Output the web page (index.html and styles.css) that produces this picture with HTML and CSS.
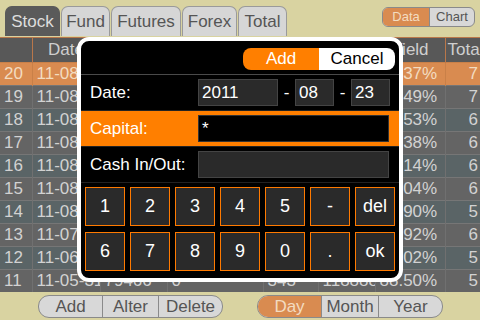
FILE: index.html
```html
<!DOCTYPE html>
<html>
<head>
  <title>Capital Log</title>
  <link rel="stylesheet" href="styles.css">
</head>
<body>
  <div class="top">
    <div class="tab active" style="width: 55px;">Stock</div>
    <div class="tab" style="width: 49px;">Fund</div>
    <div class="tab" style="width: 70px;">Futures</div>
    <div class="tab" style="width: 55px;">Forex</div>
    <div class="tab" style="width: 49px;">Total</div>
    <div class="seg small">
      <span class="on" style="width: 46px;">Data</span>
      <span style="width: 44px;">Chart</span>
    </div>
  </div>

  <table class="grid">
    <colgroup>
      <col style="width: 32px;"><col style="width: 68px;"><col style="width: 67px;"><col style="width: 96px;">
      <col style="width: 55px;"><col style="width: 57px;"><col style="width: 70px;"><col style="width: 35px;">
    </colgroup>
    <thead>
      <tr><th></th><th>Date</th><th>Capital</th><th>Cash In/Out</th><th>Profit</th><th>Value</th><th>Yield</th><th class="l">Total</th></tr>
    </thead>
    <tbody>
      <tr class="sel"><td>20</td><td>11-08-23</td><td>82410</td><td>0</td><td>512</td><td>118660</td><td class="r">16.37%</td><td class="r">7</td></tr>
      <tr><td>19</td><td>11-08-22</td><td>81898</td><td>0</td><td>-221</td><td>118148</td><td class="r">15.49%</td><td class="r">7</td></tr>
      <tr class="alt"><td>18</td><td>11-08-19</td><td>82119</td><td>0</td><td>310</td><td>118369</td><td class="r">15.53%</td><td class="r">6</td></tr>
      <tr><td>17</td><td>11-08-18</td><td>81809</td><td>0</td><td>-402</td><td>118059</td><td class="r">14.38%</td><td class="r">6</td></tr>
      <tr class="alt"><td>16</td><td>11-08-17</td><td>82211</td><td>0</td><td>128</td><td>118461</td><td class="r">14.14%</td><td class="r">6</td></tr>
      <tr><td>15</td><td>11-08-16</td><td>82083</td><td>0</td><td>95</td><td>118333</td><td class="r">13.04%</td><td class="r">6</td></tr>
      <tr class="alt"><td>14</td><td>11-08-15</td><td>81988</td><td>0</td><td>-65</td><td>118238</td><td class="r">12.90%</td><td class="r">5</td></tr>
      <tr><td>13</td><td>11-07-29</td><td>82053</td><td>0</td><td>240</td><td>118303</td><td class="r">12.92%</td><td class="r">6</td></tr>
      <tr class="alt"><td>12</td><td>11-06-30</td><td>81813</td><td>0</td><td>-130</td><td>118063</td><td class="r">10.02%</td><td class="r">5</td></tr>
      <tr><td>11</td><td>11-05-31</td><td>79466</td><td>0</td><td>343</td><td>118888</td><td class="r">88.50%</td><td class="r">5</td></tr>
    </tbody>
  </table>

  <div class="bottom">
    <div class="seg">
      <span style="width: 63px;">Add</span>
      <span style="width: 55px;">Alter</span>
      <span style="width: 63px;">Delete</span>
    </div>
    <div class="seg">
      <span class="on" style="width: 63px;">Day</span>
      <span style="width: 56px;">Month</span>
      <span style="width: 63px;">Year</span>
    </div>
  </div>

  <div class="dialog">
    <div class="dialog-head">
      <div class="choice">
        <span class="add">Add</span>
        <span class="cancel">Cancel</span>
      </div>
    </div>
    <div class="field">
      <label>Date:</label>
      <div class="box" style="width: 80px;">2011</div>
      <span class="dash">-</span>
      <div class="box" style="width: 39px;">08</div>
      <span class="dash">-</span>
      <div class="box" style="width: 39px;">23</div>
    </div>
    <div class="field current">
      <label>Capital:</label>
      <div class="box wide">*</div>
    </div>
    <div class="field">
      <label>Cash In/Out:</label>
      <div class="box wide"></div>
    </div>
    <div class="keypad">
      <button>1</button><button>2</button><button>3</button><button>4</button><button>5</button><button>-</button><button>del</button>
      <button>6</button><button>7</button><button>8</button><button>9</button><button>0</button><button>.</button><button>ok</button>
    </div>
  </div>
</body>
</html>
```

FILE: styles.css
```css
body { margin: 0; width: 480px; height: 320px; overflow: hidden; background: #d9d3a1; font-family: "Liberation Sans", Arial, sans-serif; position: relative; }

.top { height: 37px; display: flex; align-items: flex-end; padding-left: 5px; box-sizing: border-box; padding-bottom: 1px; }
.tab { height: 30px; margin-right: 1px; box-sizing: border-box; border: 1px solid #9a9a9a; border-bottom: none; border-radius: 7px 7px 0 0; background: #d6d6d6; color: #555; font-size: 17px; line-height: 30px; text-align: center; }
.tab.active { background: #5a5a5a; color: #ddd; border-color: #5a5a5a; }

.seg { display: flex; border: 1px solid #8a8a8a; border-radius: 11px; overflow: hidden; background: #d8d8d8; height: 23px; box-sizing: border-box; }
.seg span { display: block; text-align: center; color: #555; font-size: 17px; line-height: 21px; border-left: 1px solid #8a8a8a; }
.seg span:first-child { border-left: none; }
.seg span.on { background: #d98b50; color: #f3dcc0; }
.seg.small { margin-left: auto; align-self: flex-start; margin-top: 7px; margin-right: 5px; height: 20px; border-radius: 6px; }
.seg.small span { font-size: 13px; line-height: 18px; }

.grid { width: 480px; table-layout: fixed; border-collapse: collapse; }
.grid th, .grid td { white-space: nowrap; overflow: hidden; padding: 0 4px; font-size: 17px; font-weight: normal; }
.grid th { height: 24px; background: #585858; color: #cfcfcf; border-top: 1px solid #b9774a; border-left: 1px solid #b9774a; text-align: center; }
.grid th:first-child { border-left: none; }
.grid th.l { text-align: left; padding-left: 2px; }
.grid td { height: 22px; background: #646464; color: #d2d2d2; border-top: 1px solid #767676; border-left: 1px solid #707070; text-align: left; }
.grid td:first-child { border-left: none; }
.grid tr.alt td { background: #5a6466; }
.grid tr.sel td { background: #d98b50; color: #f3dcc0; border-color: #c98048; }
.grid td.r { text-align: right; padding-right: 3px; }
.grid td:nth-child(7) { padding-right: 11px; }
.grid td:last-child { padding-right: 2px; }

.bottom { display: flex; align-items: center; height: 29px; padding-left: 38px; gap: 34px; }

.dialog { position: absolute; left: 77px; top: 37px; width: 326px; height: 245px; box-sizing: border-box; background: #000; border: 4px solid #fff; border-radius: 12px; overflow: hidden; }
.dialog-head { height: 34px; display: flex; justify-content: flex-end; align-items: flex-start; padding: 7px 4px 0 0; box-sizing: border-box; border-bottom: 1px solid #4a4a4a; }
.choice { display: flex; height: 22px; border-radius: 8px; overflow: hidden; }
.choice span { display: block; width: 76px; text-align: center; font-size: 17px; line-height: 22px; }
.choice .add { background: #ff7f00; color: #fff; }
.choice .cancel { background: #fff; color: #000; }

.field { height: 35px; display: flex; align-items: center; border-bottom: 1px solid #222; }
.field label { width: 108px; padding-left: 9px; color: #fff; font-size: 17px; }
.field.current { background: #ff7f00; }
.box { height: 27px; box-sizing: border-box; background: #2a2a2a; border: 1px solid #444; color: #fff; font-size: 17px; line-height: 25px; padding-left: 3px; }
.box.wide { width: 191px; }
.field.current .box { background: #000; border-color: #333; }
.dash { width: 17px; text-align: center; color: #fff; font-size: 17px; }

.keypad { display: grid; grid-template-columns: repeat(7, 40px); grid-auto-rows: 39px; gap: 6px 5px; padding: 4px 0 0 4px; }
.keypad button { margin: 0; padding: 0; background: #2a2a2a; border: 1.5px solid #ff7a00; color: #fff; font-family: "Liberation Sans", Arial, sans-serif; font-size: 18px; }
```
